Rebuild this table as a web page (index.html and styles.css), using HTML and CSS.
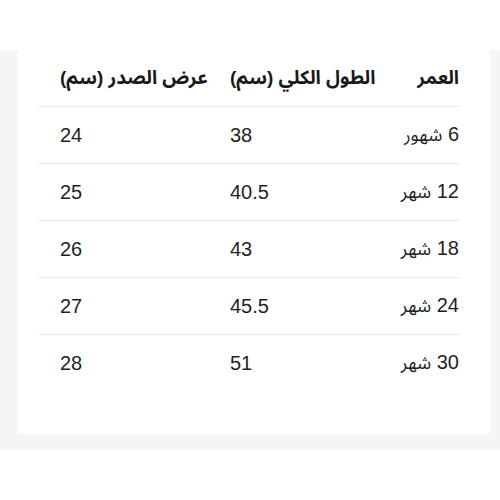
FILE: index.html
```html
<!DOCTYPE html>
<html lang="ar">
<head>
<meta charset="utf-8">
<link rel="stylesheet" href="styles.css">
</head>
<body>
<div class="band">
  <div class="card">
    <div class="table">
      <div class="row head">
        <div class="c1" dir="rtl">عرض الصدر (سم)</div>
        <div class="c2" dir="rtl">الطول الكلي (سم)</div>
        <div class="c3" dir="rtl">العمر</div>
      </div>
      <div class="row">
        <div class="c1">24</div>
        <div class="c2">38</div>
        <div class="c3" dir="rtl">6 <span class="ar">شهور</span></div>
      </div>
      <div class="row">
        <div class="c1">25</div>
        <div class="c2">40.5</div>
        <div class="c3" dir="rtl">12 <span class="ar">شهر</span></div>
      </div>
      <div class="row">
        <div class="c1">26</div>
        <div class="c2">43</div>
        <div class="c3" dir="rtl">18 <span class="ar">شهر</span></div>
      </div>
      <div class="row">
        <div class="c1">27</div>
        <div class="c2">45.5</div>
        <div class="c3" dir="rtl">24 <span class="ar">شهر</span></div>
      </div>
      <div class="row last">
        <div class="c1">28</div>
        <div class="c2">51</div>
        <div class="c3" dir="rtl">30 <span class="ar">شهر</span></div>
      </div>
    </div>
  </div>
</div>
</body>
</html>
```

FILE: styles.css
```css
html, body {
  margin: 0;
  padding: 0;
  background: #ffffff;
}

body {
  font-family: "Liberation Sans", "Noto Sans Arabic", "DejaVu Sans", sans-serif;
  color: #1f1f1f;
}

.band {
  margin-top: 50px;
  height: 400px;
  box-sizing: border-box;
  background: #f6f5f3;
  padding: 0 10px 16px 18px;
}

.card {
  height: 100%;
  box-sizing: border-box;
  background: #ffffff;
  padding: 0 30px 0 20px;
}

.row {
  display: grid;
  grid-template-columns: 177px 175px 70px;
  height: 56px;
  align-items: center;
  border-bottom: 1px solid #ebebeb;
  font-size: 20px;
  white-space: nowrap;
}

.row.last {
  border-bottom: none;
}

.row.head {
  font-weight: bold;
  font-size: 19px;
  color: #1a1a1a;
}

.ar {
  font-size: 18px;
}

.c1 {
  padding-left: 22px;
  text-align: left;
}

.c2 {
  padding-left: 15px;
  text-align: left;
}

.c3 {
  text-align: right;
  padding-right: 1px;
}

.c1[dir="rtl"], .c2[dir="rtl"] {
  text-align: left;
}
```
